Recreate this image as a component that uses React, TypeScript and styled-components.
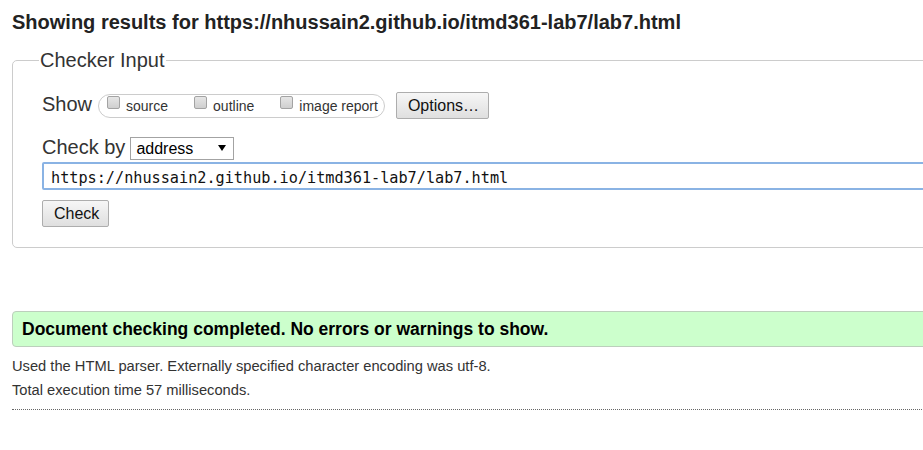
import React, { useEffect, useRef } from "react";
import styled, { createGlobalStyle } from "styled-components";

const Global = createGlobalStyle`
  html, body { margin: 0; padding: 0; background: #fff; overflow: hidden; }
  body { font-family: "Liberation Sans", Arial, sans-serif; color: #333; }
`;

const Viewport = styled.div`
  width: 100vw;
  overflow: clip;
`;

const Page = styled.main`
  width: 1180px;
  padding: 0 0 0 12px;
`;

const Title = styled.h2`
  margin: 11px 0 0;
  font-size: 20px;
  line-height: 23px;
  font-weight: bold;
  color: #222;
`;

const Fieldset = styled.fieldset`
  margin: 15px 0 0;
  padding: 0 0 20px 29px;
  border: 1px solid #ccc;
  border-radius: 5px;
  min-width: 0;
`;

const Legend = styled.legend`
  font-size: 20px;
  line-height: 23px;
  padding: 0 1px;
  margin-left: -3px;
  color: #333;
`;

const Row = styled.div<{ $top: number }>`
  display: flex;
  align-items: baseline;
  margin-top: ${(p) => p.$top}px;
`;

const RowLabel = styled.span`
  font-size: 20px;
  line-height: 23px;
  color: #333;
`;

const Pill = styled.div`
  align-self: center;
  display: inline-flex;
  align-items: flex-start;
  gap: 26px;
  height: 24px;
  box-sizing: border-box;
  margin-left: 6px;
  padding: 0 6px 0 8px;
  border: 1px solid #ccc;
  border-radius: 12px;
`;

const Option = styled.label`
  display: inline-flex;
  align-items: flex-start;
  font-size: 14px;
  line-height: 22px;
  color: #333;
`;

const Box = styled.input`
  appearance: none;
  width: 13px;
  height: 13px;
  margin: 1px 6px 0 0;
  box-sizing: border-box;
  border: 1px solid #a3a3a3;
  border-radius: 2px;
  background: linear-gradient(#e6e6e6, #cfcfcf);
`;

const Button = styled.button`
  height: 27px;
  box-sizing: border-box;
  padding: 0 11px;
  font-family: "Liberation Sans", Arial, sans-serif;
  font-size: 16px;
  color: #111;
  border: 1px solid #adadad;
  border-radius: 2px;
  background: linear-gradient(#f6f6f6, #dfdfdf);
`;

const OptionsButton = styled(Button)`
  margin-left: 11px;
  width: 93px;
`;

const CheckButton = styled(Button)`
  display: block;
  margin-top: 10px;
  width: 67px;
`;

const SelectWrap = styled.span`
  position: relative;
  display: inline-block;
  margin-left: 5px;
`;

const Select = styled.select`
  appearance: none;
  width: 104px;
  height: 23px;
  box-sizing: border-box;
  padding: 0 0 0 5px;
  font-family: "Liberation Sans", Arial, sans-serif;
  font-size: 16px;
  color: #000;
  background: #fff;
  border: 1px solid #a3a3a3;
  border-radius: 0;
`;

const Arrow = styled.svg`
  position: absolute;
  right: 8px;
  top: 8px;
  pointer-events: none;
`;

const UrlInput = styled.input`
  display: block;
  width: 1120px;
  height: 28px;
  margin-top: 2px;
  box-sizing: border-box;
  padding: 4px 0 0 7px;
  font-family: "DejaVu Sans Mono", "Liberation Mono", monospace;
  font-size: 15.2px;
  color: #111;
  border: 2px solid #8ab3e4;
  border-radius: 2px;
  outline: none;
  caret-color: #000;
`;

const Success = styled.div`
  margin-top: 63px;
  height: 36px;
  box-sizing: border-box;
  padding-left: 9px;
  border: 1px solid #bccfbc;
  border-radius: 4px;
  background: #ccffcc;
  font-size: 17.5px;
  line-height: 34px;
  font-weight: bold;
  color: #000;
`;

const Info = styled.p<{ $top: number }>`
  margin: ${(p) => p.$top}px 0 0;
  font-size: 14.7px;
  line-height: 24px;
  color: #333;
`;

const Rule = styled.hr`
  margin: 7px 0 0;
  border: 0;
  border-top: 1px dotted #666;
`;

const URL = "https://nhussain2.github.io/itmd361-lab7/lab7.html";

export default function App() {
  const ref = useRef<HTMLInputElement>(null);
  useEffect(() => {
    const el = ref.current;
    if (el) {
      el.focus({ preventScroll: true });
      el.setSelectionRange(0, 0);
      el.scrollLeft = 0;
    }
    window.scrollTo(0, 0);
  }, []);
  return (
    <>
      <Global />
      <Viewport>
        <Page>
          <Title>Showing results for {URL}</Title>
          <Fieldset>
            <Legend>Checker Input</Legend>
            <Row $top={20}>
              <RowLabel>Show</RowLabel>
              <Pill>
                <Option>
                  <Box type="checkbox" />
                  source
                </Option>
                <Option>
                  <Box type="checkbox" />
                  outline
                </Option>
                <Option>
                  <Box type="checkbox" />
                  image report
                </Option>
              </Pill>
              <OptionsButton type="button">Options…</OptionsButton>
            </Row>
            <Row $top={17}>
              <RowLabel>Check by</RowLabel>
              <SelectWrap>
                <Select defaultValue="address">
                  <option value="address">address</option>
                  <option value="upload">file upload</option>
                  <option value="input">text input</option>
                </Select>
                <Arrow width="8" height="6" viewBox="0 0 8 6">
                  <polygon points="0,0 8,0 4,6" fill="#000" />
                </Arrow>
              </SelectWrap>
            </Row>
            <UrlInput ref={ref} type="url" defaultValue={URL} />
            <CheckButton type="button">Check</CheckButton>
          </Fieldset>
          <Success>Document checking completed. No errors or warnings to show.</Success>
          <Info $top={7}>Used the HTML parser. Externally specified character encoding was utf-8.</Info>
          <Info $top={0}>Total execution time 57 milliseconds.</Info>
          <Rule />
        </Page>
      </Viewport>
    </>
  );
}
